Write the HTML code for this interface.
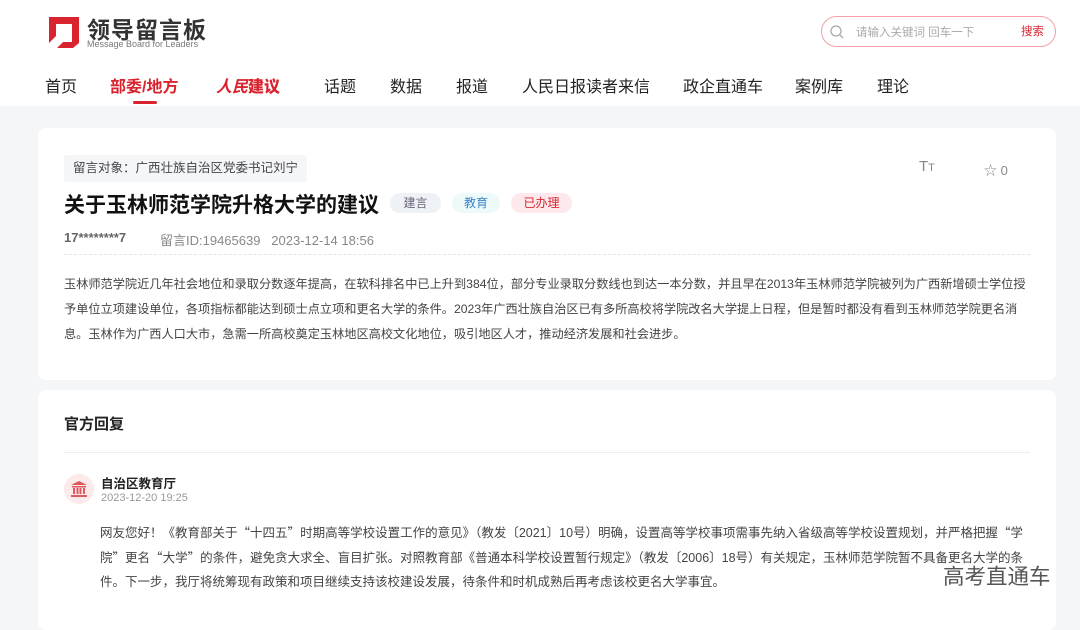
<!DOCTYPE html>
<html><head><meta charset="utf-8">
<style>
*{margin:0;padding:0;box-sizing:border-box}
body{width:1080px;height:613px;overflow:hidden;background:#f5f6f8;font-family:"Liberation Sans","Noto Sans CJK SC",sans-serif;color:#333;position:relative}
.hdr{position:absolute;left:0;top:0;width:1080px;height:106px;background:#fff}
.abs{position:absolute;white-space:nowrap}
.nav span{position:absolute;top:73px;font-size:16px;color:#222}
.card{position:absolute;left:38px;width:1018px;background:#fff;border-radius:8px}
.tag{position:absolute;top:193px;height:20px;line-height:20px;border-radius:10px;font-size:12px;text-align:center}
.cj{font-family:"Noto Sans CJK SC","Liberation Sans",sans-serif}
</style></head><body>
<div class="hdr">
  <svg class="abs" style="left:45px;top:15px" width="36" height="34" viewBox="0 0 36 34">
    <path d="M4 2H34V28L28 33H12L18 27H27V9H11V21L4 28Z" fill="#d9242f"/>
  </svg>
  <div class="abs" style="left:87px;top:11px;font-size:23px;font-weight:bold;color:#333;letter-spacing:1px">领导留言板</div>
  <div class="abs" style="left:87px;top:39px;font-size:9px;color:#777">Message Board for Leaders</div>
  <div class="abs" style="left:821px;top:16px;width:235px;height:31px;border:1px solid #f4a0a5;border-radius:16px"></div>
  <svg class="abs" style="left:830px;top:25px" width="14" height="14" viewBox="0 0 14 14"><circle cx="6" cy="6" r="5" fill="none" stroke="#aaa" stroke-width="1.3"/><path d="M10 10L13 13" stroke="#aaa" stroke-width="1.3"/></svg>
  <div class="abs" style="left:856px;top:24px;font-size:11.5px;color:#aaa">请输入关键词 回车一下</div>
  <div class="abs" style="left:1021px;top:23px;font-size:11.5px;color:#d9242f">搜索</div>
  <div class="nav">
    <span style="left:45px">首页</span>
    <span style="left:110px;color:#d9242f;font-weight:bold">部委/地方</span>
    <span style="left:216px;color:#d9242f;font-style:italic;font-weight:bold">人民<b style="font-style:normal">建议</b></span>
    <span style="left:324px">话题</span>
    <span style="left:390px">数据</span>
    <span style="left:456px">报道</span>
    <span style="left:522px">人民日报读者来信</span>
    <span style="left:683px">政企直通车</span>
    <span style="left:795px">案例库</span>
    <span style="left:877px">理论</span>
  </div>
  <div class="abs" style="left:133px;top:101px;width:24px;height:3px;background:#d9242f;border-radius:2px"></div>
</div>

<div class="card" style="top:128px;height:252px"></div>
<div class="abs" style="left:64px;top:155px;height:27px;line-height:27px;padding:0 9px;background:#f5f6f8;border-radius:3px;font-size:12.5px;color:#444">留言对象：广西壮族自治区党委书记刘宁</div>
<div class="abs" style="left:64px;top:189px;font-size:21px;font-weight:bold;color:#111">关于玉林师范学院升格大学的建议</div>
<div class="tag" style="left:390px;width:51px;background:#eef1f6;color:#667">建言</div>
<div class="tag" style="left:452px;width:48px;background:#eefafa;color:#3a84c8">教育</div>
<div class="tag" style="left:511px;width:61px;background:#fde9ec;color:#d9242f">已办理</div>
<div class="abs" style="left:919px;top:158px;font-size:15px;color:#888">T<span style="font-size:11px">T</span></div>
<div class="abs" style="left:984px;top:160px;font-size:13px;color:#888">☆ 0</div>
<div class="abs" style="left:64px;top:230px;font-size:13px;color:#666;font-weight:bold">17********7</div>
<div class="abs" style="left:160px;top:230px;font-size:13px;color:#888">留言ID:19465639&nbsp;&nbsp;&nbsp;2023-12-14 18:56</div>
<div class="abs" style="left:64px;top:254px;width:966px;border-top:1px dashed #e4e4e4"></div>
<div class="abs" style="left:64px;top:272px;font-size:12.2px;line-height:25px;color:#444">玉林师范学院近几年社会地位和录取分数逐年提高，在软科排名中已上升到384位，部分专业录取分数线也到达一本分数，并且早在2013年玉林师范学院被列为广西新增硕士学位授<br>予单位立项建设单位，各项指标都能达到硕士点立项和更名大学的条件。2023年广西壮族自治区已有多所高校将学院改名大学提上日程，但是暂时都没有看到玉林师范学院更名消<br>息。玉林作为广西人口大市，急需一所高校奠定玉林地区高校文化地位，吸引地区人才，推动经济发展和社会进步。</div>

<div class="card" style="top:390px;height:240px"></div>
<div class="abs" style="left:64px;top:413px;font-size:15px;font-weight:bold;color:#222">官方回复</div>
<div class="abs" style="left:64px;top:452px;width:966px;border-top:1px solid #eee"></div>
<div class="abs" style="left:64px;top:474px;width:30px;height:30px;border-radius:15px;background:#fdeaea"></div>
<svg class="abs" style="left:70px;top:480px" width="18" height="18" viewBox="0 0 18 18" fill="#e0585e"><path d="M9 1L17 5H1Z"/><rect x="2" y="6" width="14" height="1.5"/><rect x="3" y="8" width="2" height="6"/><rect x="6.5" y="8" width="2" height="6"/><rect x="9.5" y="8" width="2" height="6"/><rect x="13" y="8" width="2" height="6"/><rect x="1" y="15" width="16" height="2"/></svg>
<div class="abs" style="left:101px;top:473px;font-size:12.5px;font-weight:bold;color:#222">自治区教育厅</div>
<div class="abs" style="left:101px;top:492px;font-size:11px;color:#999">2023-12-20 19:25</div>
<div class="abs" style="left:100px;top:520px;width:935px;white-space:normal;font-size:12.5px;line-height:24px;color:#444">网友您好！《教育部关于<span class="cj">“</span>十四五<span class="cj">”</span>时期高等学校设置工作的意见》（教发〔2021〕10号）明确，设置高等学校事项需事先纳入省级高等学校设置规划，并严格把握<span class="cj">“</span>学院<span class="cj">”</span>更名<span class="cj">“</span>大学<span class="cj">”</span>的条件，避免贪大求全、盲目扩张。对照教育部《普通本科学校设置暂行规定》（教发〔2006〕18号）有关规定，玉林师范学院暂不具备更名大学的条件。下一步，我厅将统筹现有政策和项目继续支持该校建设发展，待条件和时机成熟后再考虑该校更名大学事宜。</div>
<div class="abs" style="left:943px;top:560px;font-size:21.5px;color:#555;text-shadow:0 0 2px #fff">高考直通车</div>
</body></html>
